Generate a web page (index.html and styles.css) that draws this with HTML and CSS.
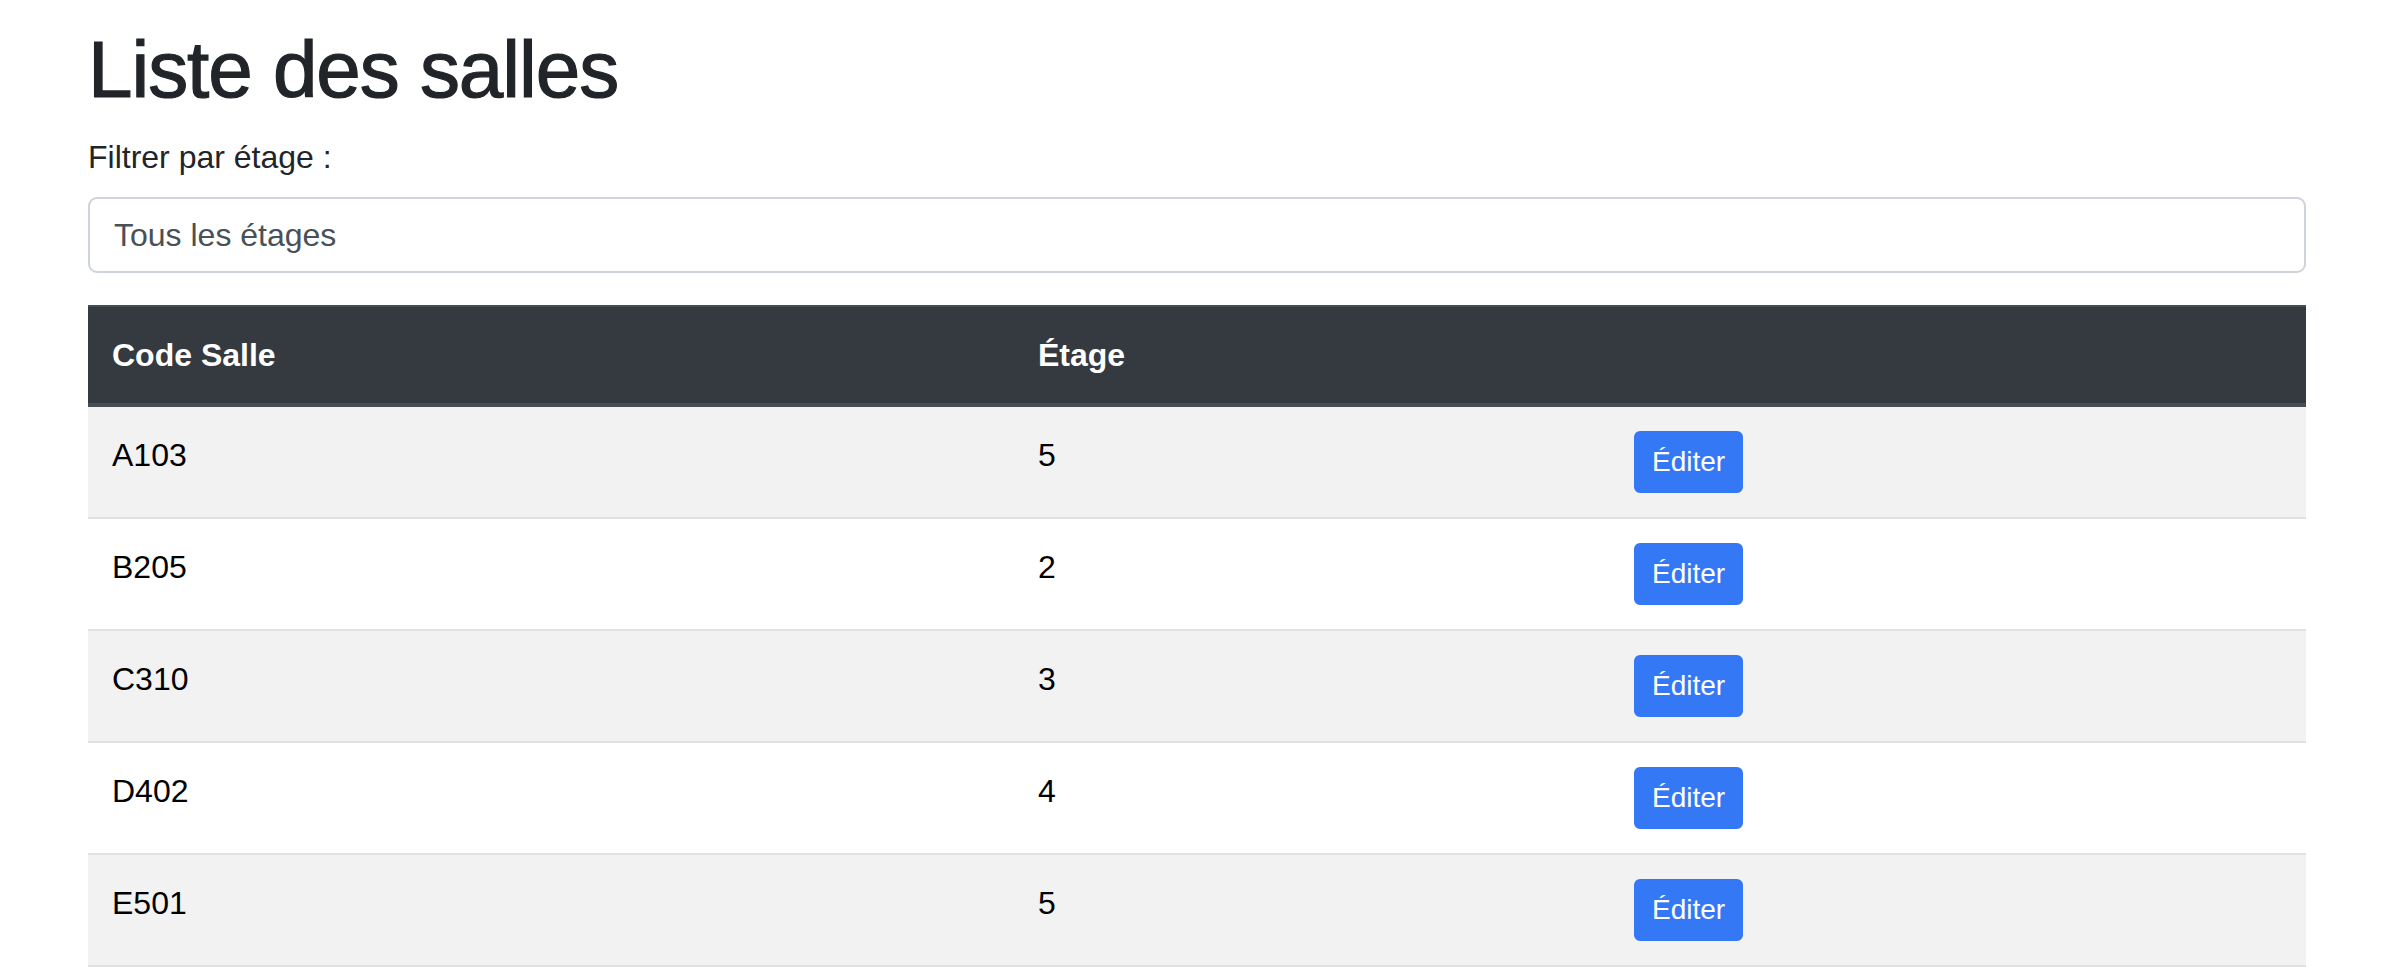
FILE: index.html
```html
<!DOCTYPE html>
<html lang="fr">
<head>
<meta charset="utf-8">
<title>Liste des salles</title>
<link rel="stylesheet" href="styles.css">
</head>
<body>
<div class="container">
  <h1 class="title">Liste des salles</h1>
  <label class="filter-label" for="etage">Filtrer par étage :</label>
  <div class="select" id="etage">Tous les étages</div>
  <table class="rooms">
    <colgroup>
      <col class="col-code">
      <col class="col-etage">
      <col class="col-action">
    </colgroup>
    <thead>
      <tr><th>Code Salle</th><th>Étage</th><th></th></tr>
    </thead>
    <tbody>
      <tr><td>A103</td><td>5</td><td><button class="btn">Éditer</button></td></tr>
      <tr><td>B205</td><td>2</td><td><button class="btn">Éditer</button></td></tr>
      <tr><td>C310</td><td>3</td><td><button class="btn">Éditer</button></td></tr>
      <tr><td>D402</td><td>4</td><td><button class="btn">Éditer</button></td></tr>
      <tr><td>E501</td><td>5</td><td><button class="btn">Éditer</button></td></tr>
    </tbody>
  </table>
</div>
</body>
</html>
```
FILE: styles.css
```css
* { box-sizing: border-box; }
html, body { margin: 0; padding: 0; background: #fff; }
body {
  font-family: "Liberation Sans", Arial, sans-serif;
  font-size: 32px;
  line-height: 1.5;
  color: #212529;
}
.container {
  padding: 22px 84px 0 88px;
}
.title {
  font-size: 80px;
  font-weight: 400;
  line-height: 1.2;
  letter-spacing: -1.05px;
  -webkit-text-stroke: 1.2px #212529;
  margin: 0 0 16px 0;
}
.filter-label {
  display: block;
  margin: -1px 0 16px 0;
}
.select {
  height: 76px;
  border: 2px solid #ced4da;
  border-radius: 9px;
  padding: 12px 24px;
  color: #495057;
  margin-bottom: 32px;
}
.rooms {
  width: 100%;
  border-collapse: collapse;
  color: #000;
  border-bottom: 2px solid #dee2e6;
}
.col-code { width: 926px; }
.col-etage { width: 596px; }
.rooms th {
  background: #343a40;
  color: #fff;
  font-weight: 700;
  text-align: left;
  padding: 24px;
  vertical-align: bottom;
  border-top: 2px solid #454d55;
  border-bottom: 4px solid #454d55;
}
.rooms td {
  padding: 24px;
  vertical-align: top;
  border-top: 2px solid #dee2e6;
}
.rooms tbody tr:nth-child(odd) { background: #f2f2f2; }
.btn {
  font-family: "Liberation Sans", Arial, sans-serif;
  font-size: 28px;
  line-height: 1.5;
  color: #fff;
  background: #3478f6;
  border: 2px solid #3478f6;
  border-radius: 6px;
  padding: 8px 16px;
  display: block;
  cursor: pointer;
}
```
